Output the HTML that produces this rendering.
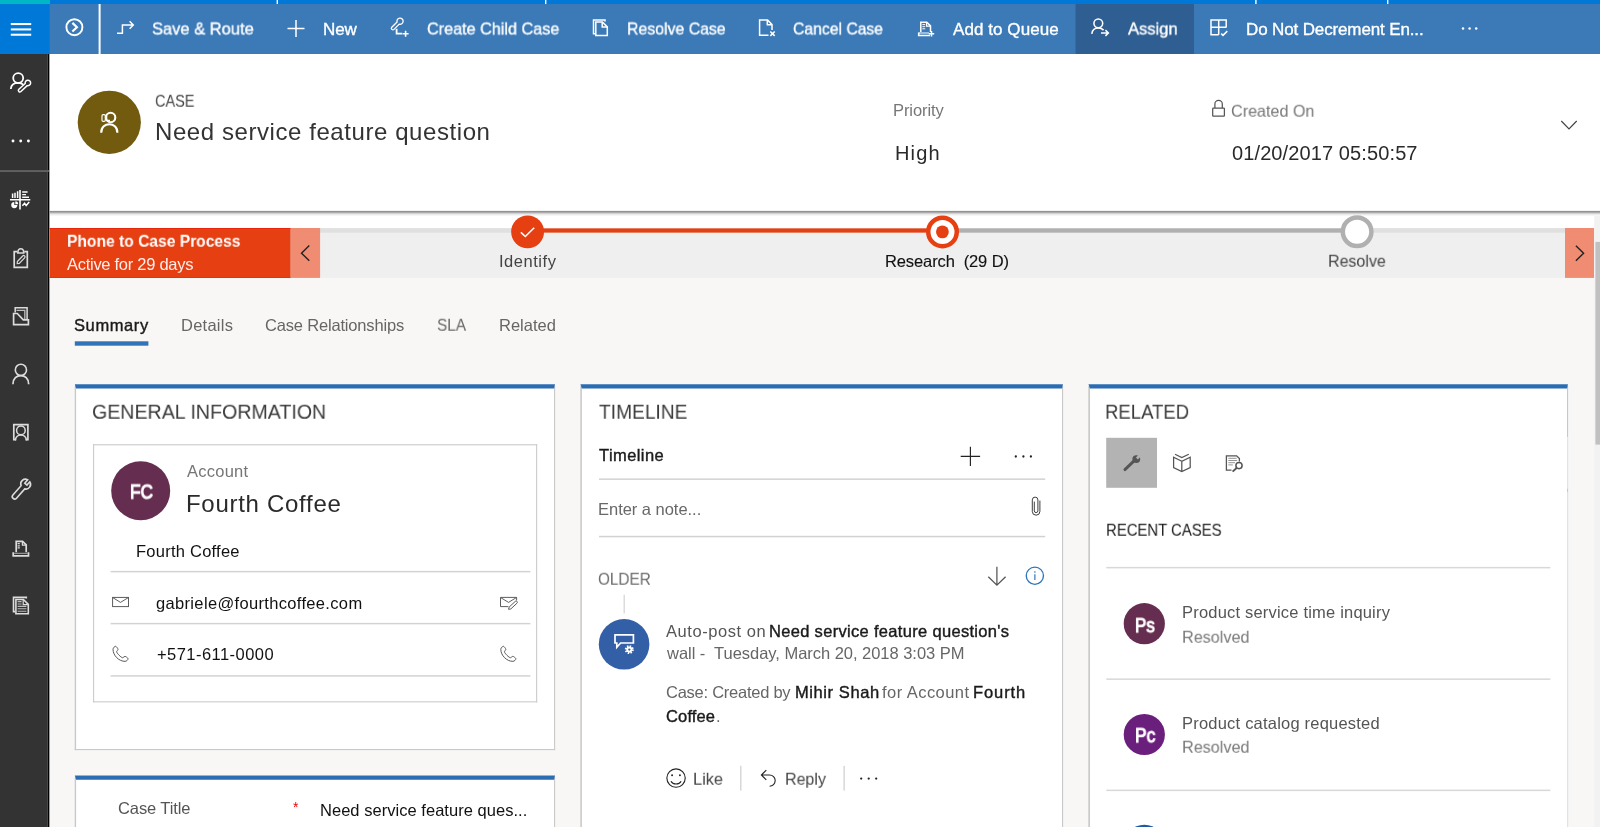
<!DOCTYPE html>
<html><head><meta charset="utf-8"><title>Case: Need service feature question</title>
<style>
html,body{margin:0;padding:0;}
body{width:1600px;height:827px;overflow:hidden;position:relative;background:#f8f7f6;font-family:"Liberation Sans", sans-serif;}
.t{position:absolute;white-space:nowrap;line-height:1;transform:translateY(-50%);will-change:transform;}
.a{position:absolute;}
</style></head><body>
<svg class="a" style="left:0;top:0" width="1600" height="827" viewBox="0 0 1600 827" shape-rendering="geometricPrecision">
<rect x="0" y="0" width="1600" height="4" fill="#0078d7"/>
<rect x="0" y="0" width="50" height="4" fill="#00b7c3"/>
<rect x="276.6" y="0" width="1.4" height="4" fill="#fff"/>
<rect x="545" y="0" width="1.4" height="4" fill="#fff"/>
<rect x="1255.2" y="0" width="1.4" height="4" fill="#fff"/>
<rect x="1387" y="0" width="1.4" height="4" fill="#fff"/>
<rect x="0" y="4" width="1600" height="50" fill="#3b79b7"/>
<rect x="0" y="4" width="49.6" height="50" fill="#0078d7"/>
<rect x="1075.6" y="4" width="118.4" height="50" fill="#2f5e92"/>
<rect x="98.6" y="4" width="2" height="50" fill="#fff"/>
<rect x="10.8" y="23" width="20.4" height="2.05" fill="#fff"/>
<rect x="10.8" y="28.4" width="20.4" height="2.05" fill="#fff"/>
<rect x="10.8" y="33.7" width="20.4" height="2.05" fill="#fff"/>
<rect x="49.4" y="54" width="1551" height="174" fill="#fff"/>
<rect x="0" y="54" width="47.8" height="773" fill="#333"/>
<rect x="47.8" y="54" width="1.55" height="773" fill="#000"/>
<rect x="0" y="170.2" width="49" height="1.7" fill="#666"/>
<defs><linearGradient id="sh" x1="0" y1="0" x2="0" y2="1"><stop offset="0" stop-color="#898989" stop-opacity="0"/><stop offset="0.06" stop-color="#898989" stop-opacity="0"/><stop offset="0.15" stop-color="#898989" stop-opacity="0.8"/><stop offset="0.25" stop-color="#898989" stop-opacity="1"/><stop offset="0.43" stop-color="#898989" stop-opacity="0.5"/><stop offset="0.64" stop-color="#898989" stop-opacity="0.17"/><stop offset="0.9" stop-color="#898989" stop-opacity="0"/></linearGradient></defs>
<rect x="49.4" y="210" width="1551" height="7" fill="url(#sh)"/>
<circle cx="109.3" cy="122.3" r="31.6" fill="#725b0e"/>
<rect x="49.4" y="228" width="1544.6" height="49.9" fill="#efefef"/>
<rect x="320" y="228.2" width="1245" height="4.5" fill="#e0e0e0"/>
<rect x="49.4" y="228" width="241.3" height="49.9" fill="#e63f12"/>
<rect x="49.4" y="228" width="241.3" height="0.7" fill="#e81c0a"/>
<rect x="49.4" y="277.3" width="241.3" height="0.6" fill="#e81c0a"/>
<rect x="290.7" y="228" width="29.4" height="49.9" fill="#f08c72"/>
<rect x="1565" y="228" width="29" height="49.9" fill="#f08c72"/>
<rect x="527" y="228.4" width="415" height="4.2" fill="#e63f12"/>
<rect x="942" y="228.4" width="400" height="4.2" fill="#b0b0b0"/>
<circle cx="527.6" cy="231.85" r="16.45" fill="#e63f12"/>
<circle cx="942.5" cy="231.9" r="14.25" fill="#fff" stroke="#e63f12" stroke-width="4.5"/>
<circle cx="942.4" cy="231.85" r="6.4" fill="#e63f12"/>
<circle cx="1357.1" cy="231.8" r="14.3" fill="#fff" stroke="#b0b0b0" stroke-width="4.5"/>
<rect x="1594.2" y="215.8" width="5.8" height="612" fill="#f2f2f2"/>
<rect x="1595.4" y="241.9" width="4.6" height="202.7" fill="#c1c1c1"/>
<rect x="74.8" y="341.3" width="73.6" height="4.4" fill="#3073b9"/>
<rect x="74.7" y="384" width="480.45" height="366.1" fill="#fff"/>
<rect x="74.7" y="386" width="1.4" height="364.1" fill="#c8c8c8"/>
<rect x="554.05" y="386" width="1.1" height="364.1" fill="#c8c8c8"/>
<rect x="74.7" y="749" width="480.45" height="1.1" fill="#c8c8c8"/>
<path d="M74.8 384.25 H555.05 L554.05 388.45 H76.1 Z" fill="#2b6cb3"/>
<rect x="74.7" y="775.3" width="480.45" height="64.7" fill="#fff"/>
<rect x="74.7" y="777.3" width="1.4" height="62.7" fill="#c8c8c8"/>
<rect x="554.05" y="777.3" width="1.1" height="62.7" fill="#c8c8c8"/>
<path d="M74.8 775.55 H555.05 L554.05 779.75 H76.1 Z" fill="#2b6cb3"/>
<rect x="580.3" y="384" width="482.8" height="456" fill="#fff"/>
<rect x="580.3" y="386" width="1.55" height="454" fill="#c8c8c8"/>
<rect x="1062" y="386" width="1.1" height="454" fill="#c8c8c8"/>
<path d="M580.4 384.25 H1063 L1062 388.45 H581.85 Z" fill="#2b6cb3"/>
<rect x="1088.3" y="384" width="479.8" height="456" fill="#fff"/>
<rect x="1088.3" y="386" width="1.65" height="454" fill="#c8c8c8"/>
<rect x="1567" y="386" width="1.1" height="454" fill="#c8c8c8"/>
<path d="M1088.4 384.25 H1568 L1567 388.45 H1089.95 Z" fill="#2b6cb3"/>
<rect x="1567" y="437.3" width="1.2" height="51" fill="#fff"/>
<rect x="1567" y="437.3" width="1.1" height="51" fill="#e4e4e4"/>
<rect x="1567" y="492" width="1.2" height="340" fill="#fff"/>
<rect x="1567" y="492" width="1.1" height="340" fill="#e2e2e2"/>
<rect x="93" y="444.2" width="444.2" height="1.15" fill="#cdcdcd"/>
<rect x="93" y="701.25" width="444.2" height="1.15" fill="#cdcdcd"/>
<rect x="93" y="444.2" width="1.15" height="258.2" fill="#cdcdcd"/>
<rect x="536.05" y="444.2" width="1.15" height="258.2" fill="#cdcdcd"/>
<circle cx="140.7" cy="490.7" r="29.5" fill="#652d50"/>
<rect x="110.6" y="570.9" width="419.8" height="1.45" fill="#d2d2d2"/>
<rect x="110.6" y="622.9" width="419.8" height="1.45" fill="#d2d2d2"/>
<rect x="110.6" y="675.2" width="419.8" height="1.45" fill="#d2d2d2"/>
<rect x="599" y="478.4" width="446.2" height="1.5" fill="#d2d2d2"/>
<rect x="599" y="535.8" width="446.2" height="1.5" fill="#d2d2d2"/>
<rect x="623.5" y="594.8" width="1.5" height="18.6" fill="#dcdcdc"/>
<circle cx="624.1" cy="644.3" r="25.3" fill="#335fa6"/>
<rect x="740" y="765.8" width="1.5" height="24.8" fill="#d8d8d8"/>
<rect x="843.4" y="765.8" width="1.5" height="24.8" fill="#d8d8d8"/>
<rect x="1106.2" y="437.8" width="50.8" height="50" fill="#b3b3b3"/>
<rect x="1106.3" y="566.9" width="444" height="1.5" fill="#d8d8d8"/>
<rect x="1106.3" y="678.4" width="444" height="1.5" fill="#d8d8d8"/>
<rect x="1106.3" y="789.6" width="444" height="1.5" fill="#d8d8d8"/>
<circle cx="1144.3" cy="623.7" r="20.6" fill="#652d50"/>
<circle cx="1144.3" cy="734.5" r="20.6" fill="#6b1f7c"/>
<circle cx="1144.3" cy="845.4" r="20.6" fill="#1e5aa8"/>
</svg>
<svg class="a" style="left:0;top:0" width="1600" height="60" viewBox="0 0 1600 60" fill="none" stroke="#fff" stroke-width="1.5" stroke-linecap="butt" stroke-linejoin="miter">
<!-- circle chevron -->
<circle cx="74.4" cy="27.2" r="8" stroke-width="1.9"/>
<path d="M72.4 22.9 L76.9 27.2 L72.4 31.5" stroke-width="2.2"/>
<!-- route -->
<path d="M117 33.3 H122.4 V25 H132.6 M129.6 21.3 L133.3 25 L129.6 28.7" stroke-width="1.5"/>
<!-- plus -->
<path d="M287.5 28.4 H304.5 M296 19.9 V36.9" stroke-width="1.5"/>
<!-- create child case -->
<g stroke-width="1.3">
<path transform="translate(392.9 28.3) rotate(-45)" d="M0 -1.55 H7.4 A3.1 3.1 0 1 1 7.4 1.55 H0 A1.55 1.55 0 0 1 0 -1.55 Z"/>
<path d="M396.6 28.8 V33.6 H402.2" stroke-width="1.8"/>
<path d="M402.6 33.8 H408.6 M405.6 30.8 V36.8" stroke-width="1.6"/>
</g>
<!-- resolve case (two pages) -->
<g stroke-width="1.5">
<path d="M595.2 33.8 H593.5 V20 H605 V21.6"/>
<path d="M595.8 22 H602.4 L607.3 26.9 V35.5 H595.8 Z"/>
<path d="M602.2 22.2 V27.1 H607.1"/>
</g>
<!-- cancel case -->
<g stroke-width="1.5">
<path d="M768.5 35.2 H759.6 V20.1 H767.6 L772 24.5 V30"/>
<path d="M767.3 20.4 V24.8 H771.7"/>
<path d="M770.3 31.5 L774.7 35.9 M774.7 31.5 L770.3 35.9" stroke-width="1.6"/>
</g>
<!-- add to queue -->
<g stroke-width="1.4">
<path d="M920.8 32 V22.2 H926.8 L930.5 25.9 V32" stroke-width="1.5"/>
<path d="M926.6 22.4 V26.1 H930.3" stroke-width="1.2"/>
<path d="M922.4 24.6 H925.2 M922.4 26.7 H925.2 M922.4 28.8 H925.2" stroke-width="1"/>
<path d="M918.7 32.4 V35.5 H930" stroke-width="1.6"/>
<path d="M918.7 33 H929" stroke-width="1"/>
<path d="M928.8 33.7 H934.2 M931.5 31 V36.4" stroke-width="1.5"/>
</g>
<!-- assign -->
<g stroke-width="1.55">
<circle cx="1098.3" cy="23.3" r="4.4"/>
<path d="M1091.8 33.8 C1092.2 30 1095 27.9 1098.3 27.9 C1100.5 27.9 1102.3 28.7 1103.6 30.1"/>
<path d="M1101 33 H1108.2 M1105.4 30.1 L1108.4 33 L1105.4 35.9" stroke-width="1.5"/>
</g>
<!-- table check -->
<g stroke-width="1.5">
<path d="M1226.2 27.6 V20 H1211 V34.7 H1218.7"/>
<path d="M1218.7 20 V34.7 M1211 27.3 H1226.2"/>
<path d="M1221.2 33.6 L1223 35.4 L1227.3 31.1" stroke-width="1.5"/>
</g>
<!-- more -->
<g fill="#fff" stroke="none"><circle cx="1463" cy="28.4" r="1.25"/><circle cx="1469.6" cy="28.4" r="1.25"/><circle cx="1476.2" cy="28.4" r="1.25"/></g>
</svg>
<svg class="a" style="left:50px;top:60px" width="1550" height="767" viewBox="50 60 1550 767" fill="none" stroke-linecap="butt" stroke-linejoin="miter">
<!-- case avatar icon -->
<g stroke="#fff" stroke-width="2.1">
<circle cx="110.6" cy="117.5" r="4.7"/>
<path d="M101.2 132.7 C101.2 121.4 117.4 121.4 117.4 132.7"/>
<rect x="102" y="114.6" width="3.3" height="6.8" rx="1.2" stroke-width="1.15"/>
<path d="M106.7 115.4 V120.3 H110" stroke-width="1.15"/>
</g>
<!-- lock -->
<g stroke="#555" stroke-width="1.25">
<rect x="1212.7" y="108.1" width="11.7" height="8.1" rx="0.6"/>
<path d="M1214.9 108 V104 A3.7 3.5 0 0 1 1222.3 104 V108"/>
</g>
<!-- header chevron -->
<path d="M1561.3 121 L1569 128.8 L1576.7 121" stroke="#444" stroke-width="1.2"/>
<!-- process chevrons -->
<path d="M309.3 245.6 L301.5 253.2 L309.3 260.8" stroke="#222" stroke-width="1.4"/>
<path d="M1575.9 245.7 L1583.6 253.2 L1575.9 260.7" stroke="#222" stroke-width="1.4"/>
<!-- identify check -->
<path d="M520.9 232.3 L525.3 236.5 L534.2 227.7" stroke="#fff" stroke-width="1.6"/>
<!-- email -->
<g stroke="#555" stroke-width="0.95">
<rect x="112.6" y="597.4" width="15.9" height="9.2"/>
<path d="M112.8 597.6 L120.5 602.4 L128.3 597.6"/>
<!-- email edit -->
<path d="M508.4 606.6 H500.5 V597.4 H516.6 V600.3"/>
<path d="M500.7 597.6 L508.5 602.4 L516.4 597.6"/>
<path transform="translate(508.6 609.3) rotate(-43)" d="M0 0 L1.8 -1.25 H10.3 A1.25 1.25 0 0 1 10.3 1.25 H1.8 Z" fill="#fff" stroke-width="0.9"/>
</g>
<!-- phones -->
<g stroke="#555" stroke-width="0.95" stroke-linejoin="round">
<path id="ph" transform="translate(112.2 645.6) scale(1.03)" d="M3.4 0.7 C2.4 0.7 0.8 2.1 0.8 3.6 C0.8 9.6 6.5 15.3 12.5 15.3 C14 15.3 15.4 13.7 15.4 12.7 C15.4 12.2 13.1 10.4 12.4 10.4 C11.7 10.4 10.8 11.8 10.2 11.8 C8.8 11.8 4.3 7.3 4.3 5.9 C4.3 5.3 5.7 4.4 5.7 3.7 C5.7 3 3.9 0.7 3.4 0.7 Z"/>
<path transform="translate(500 645.6) scale(1.03)" d="M3.4 0.7 C2.4 0.7 0.8 2.1 0.8 3.6 C0.8 9.6 6.5 15.3 12.5 15.3 C14 15.3 15.4 13.7 15.4 12.7 C15.4 12.2 13.1 10.4 12.4 10.4 C11.7 10.4 10.8 11.8 10.2 11.8 C8.8 11.8 4.3 7.3 4.3 5.9 C4.3 5.3 5.7 4.4 5.7 3.7 C5.7 3 3.9 0.7 3.4 0.7 Z"/>
</g>
<!-- timeline plus/dots/clip -->
<path d="M960.7 456.4 H980.1 M970.4 446.8 V466" stroke="#222" stroke-width="1.15"/>
<g fill="#222"><circle cx="1015.8" cy="456.5" r="1.15"/><circle cx="1023.4" cy="456.5" r="1.15"/><circle cx="1030.9" cy="456.5" r="1.15"/></g>
<path d="M1039.9 500.6 V511.4 A3.8 3.8 0 0 1 1032.3 511.4 V499.9 A2.8 2.8 0 0 1 1037.9 499.9 V510.8 A1.8 1.8 0 0 1 1034.3 510.8 V501.6" stroke="#333" stroke-width="0.95"/>
<!-- older arrow + info -->
<path d="M996.9 566.7 V584.6 M988.3 576.7 L996.9 585.2 L1005.6 576.7" stroke="#555" stroke-width="1.25"/>
<circle cx="1034.85" cy="575.7" r="8.6" stroke="#2e75b8" stroke-width="1.35"/>
<path d="M1034.85 574.3 V579.9 M1034.85 571.2 V572.7" stroke="#5b92c9" stroke-width="1.5"/>
<!-- post icon -->
<g stroke="#fff">
<path d="M615 643 V634.9 H633.4 V643 H620.6 L616.8 647.2 V643 Z" stroke-width="1.7"/>
<circle cx="629.3" cy="649.6" r="3.3" stroke-width="2.4" stroke-dasharray="1.35 1.24"/>
<circle cx="629.3" cy="649.6" r="2.1" stroke-width="1.9"/>
</g>
<!-- like / reply -->
<g stroke="#222" stroke-width="1.1">
<circle cx="676.05" cy="778.05" r="9.2"/>
<path d="M671 781.2 C672.6 784.9 679.5 784.9 681.1 781.2"/>
<path d="M761.4 775 H769.6 A5.6 5.6 0 0 1 769.6 786.2 M766.3 770.1 L761.4 775 L766.3 779.9"/>
</g>
<g fill="#222"><circle cx="672.1" cy="775.3" r="0.95"/><circle cx="679.9" cy="775.3" r="0.95"/>
<circle cx="861.2" cy="778.6" r="1.15"/><circle cx="868.7" cy="778.6" r="1.15"/><circle cx="876.2" cy="778.6" r="1.15"/></g>
<!-- related icons -->
<g stroke="#555">
<path d="M1124.9 469.6 L1134.6 460.4" stroke-width="2.9" stroke-linecap="round"/>
<circle cx="1136.3" cy="459.1" r="3.9" fill="#555" stroke="none"/>
<path d="M1136.9 458.5 L1141 454.4" stroke="#b3b3b3" stroke-width="2.7"/>
<g stroke-width="1.25">
<path d="M1181.8 461.2 L1173.6 457.2 V467.6 L1181.8 471.6 L1190.2 467.6 V457.2 Z M1181.8 461.2 V471.6"/>
<path d="M1175 454.2 L1181.8 457.6 L1188.8 454.2" />
</g>
<g stroke-width="1.3">
<path d="M1231.5 470.2 H1226.4 V455.8 H1236.6 L1239.4 458.6 V461.6"/>
<path d="M1228.3 458.3 H1236.6 M1228.3 460.5 H1237.2 M1228.3 462.7 H1235 M1228.3 464.9 H1232.8" stroke-width="0.9" stroke="#888"/>
<circle cx="1239" cy="465.6" r="3.1" stroke-width="1.5" fill="#fff"/>
<path d="M1236.6 468 L1232.6 471.6" stroke-width="1.9"/>
</g>
</g>
</svg>
<svg class="a" style="left:0;top:54px" width="50" height="773" viewBox="0 54 50 773" fill="none" stroke="#fff" stroke-width="1.6" stroke-linecap="butt" stroke-linejoin="miter">
<!-- person + wrench -->
<circle cx="18.2" cy="78.1" r="5" stroke-width="1.8"/>
<path d="M10.8 89 C11.1 85.3 14 82.9 18.2 82.9 C20.2 82.9 22 83.5 23.4 84.6" stroke-width="1.8"/>
<path transform="translate(19.9 90.4) rotate(-43)" d="M0 -1.5 H8.6 A2.75 2.75 0 1 1 8.6 1.5 H0 A1.5 1.5 0 0 1 0 -1.5 Z" stroke-width="1.5" fill="#333"/>
<!-- dots -->
<g fill="#fff" stroke="none"><circle cx="13" cy="141" r="1.45"/><circle cx="20.7" cy="141" r="1.45"/><circle cx="28.4" cy="141" r="1.45"/></g>
<!-- dashboard -->
<path d="M20 190 V209.6 M10 199.8 H30.3" stroke-width="1.6"/>
<path d="M12.6 198 V193.6 M15 198 V192.8 M17.6 198 V191.3" stroke-width="1.5"/>
<path d="M22.2 192 H27.6 M22.2 194.6 H26 M22.2 197.2 H29" stroke-width="1.4"/>
<path d="M14.3 202 A3.1 3.1 0 1 0 17.4 205.1 H14.3 Z" fill="#fff" stroke="none"/>
<path d="M15.3 201.3 A3 3 0 0 1 18.2 204.2 H15.3 Z" fill="#fff" stroke="none"/>
<path d="M22.4 205.8 L24.6 203.3 L26.2 205.6 L29.2 202" stroke-width="1.5"/>
<g stroke="#dcdcdc" stroke-width="1.7">
<!-- clipboard -->
<path d="M17.4 251.7 H14.2 V267.3 H27.3 V251.7 H24.2"/>
<path d="M17 252.9 H24.6 M17.9 252.6 C17.9 247.6 23.7 247.6 23.7 252.6" stroke-width="1.5"/>
<path transform="translate(17.2 263.6) rotate(-46)" d="M0 0 L1.6 -1.35 H9.3 A1.35 1.35 0 0 1 9.3 1.35 H1.6 Z" stroke-width="1.2"/>
<!-- folder -->
<path d="M13.6 313.5 H17.3 L23.3 319.9 H28.4 V324.7 H13.6 Z"/>
<path d="M15.2 312.6 V307.7 H27.1 V319" stroke-width="1.5"/>
<path d="M16.5 310.3 H24.8 V319" stroke-width="1.3" stroke="#bdbdbd"/>
<!-- person -->
<circle cx="20.9" cy="369.9" r="5.6" stroke-width="1.6"/>
<path d="M12.9 384.3 C12.9 372.6 28.7 372.6 28.7 384.3" stroke-width="1.7"/>
<!-- contact card -->
<path d="M15.9 439.6 H13.8 V424.7 H27.9 V439.6 H25.9" stroke-width="1.7"/>
<circle cx="20.9" cy="430.4" r="4.3" stroke-width="1.5"/>
<path d="M15.5 440.4 C15.5 433.2 26.3 433.2 26.3 440.4" stroke-width="1.6"/>
<!-- wrench -->
<path transform="translate(14.7 496.6) rotate(-48.6)" d="M0 -2.4 H12.4 A4.7 4.7 0 0 1 21.2 -1.3 L16.7 -1.3 L16.7 1.6 L21.1 1.6 A4.7 4.7 0 0 1 12.4 2.4 H0 A2.4 2.4 0 0 1 0 -2.4 Z" stroke-width="1.6"/>
<!-- queue -->
<path d="M16.2 552.3 V541.3 H22.6 L26.2 544.9 V552.3" stroke-width="1.7"/>
<path d="M22.4 541.5 V545.1 H26" stroke-width="1.2"/>
<path d="M17.6 543.7 H19.8 M17.6 545.8 H19.8 M17.6 547.9 H19.8" stroke-width="1.2"/>
<path d="M13.2 552.2 V555.8 H28.5 V552.2" stroke-width="1.7"/>
<path d="M14 553.3 H27.7" stroke-width="1" stroke="#aaa"/>
<!-- docs -->
<path d="M15 611.6 H13.5 V597.4 H26.3 V598.6" stroke-width="1.6"/>
<path d="M15.9 599.5 H23.4 L28.3 604.4 V613.7 H15.9 Z" stroke-width="1.6"/>
<path d="M23.2 599.7 V604.6 H28.1" stroke-width="1.2"/>
<path d="M17.6 601.6 H21.6 M17.6 604 H21.6 M17.6 606.4 H26.4 M17.6 608.8 H26.4 M17.6 611.2 H26.4" stroke-width="1.1" stroke="#bdbdbd"/>
</g>
</svg>

<div class="t" id="t0" style="left:152.29px;top:29.3px;font-size:17px;color:#fff;transform-origin:0 50%;transform:translateY(-50%) scaleX(0.9699);-webkit-text-stroke:0.35px #fff;">Save &amp; Route</div>
<div class="t" id="t1" style="left:323.30px;top:29.3px;font-size:17px;color:#fff;letter-spacing:-0.104px;-webkit-text-stroke:0.35px #fff;">New</div>
<div class="t" id="t2" style="left:426.67px;top:29.3px;font-size:17px;color:#fff;transform-origin:0 50%;transform:translateY(-50%) scaleX(0.9524);-webkit-text-stroke:0.35px #fff;">Create Child Case</div>
<div class="t" id="t3" style="left:626.59px;top:29.3px;font-size:17px;color:#fff;transform-origin:0 50%;transform:translateY(-50%) scaleX(0.9323);-webkit-text-stroke:0.35px #fff;">Resolve Case</div>
<div class="t" id="t4" style="left:792.97px;top:29.3px;font-size:17px;color:#fff;transform-origin:0 50%;transform:translateY(-50%) scaleX(0.9248);-webkit-text-stroke:0.35px #fff;">Cancel Case</div>
<div class="t" id="t5" style="left:952.77px;top:29.3px;font-size:17px;color:#fff;letter-spacing:0.069px;-webkit-text-stroke:0.35px #fff;">Add to Queue</div>
<div class="t" id="t6" style="left:1127.57px;top:29.3px;font-size:17px;color:#fff;transform-origin:0 50%;transform:translateY(-50%) scaleX(0.9747);-webkit-text-stroke:0.35px #fff;">Assign</div>
<div class="t" id="t7" style="left:1245.60px;top:29.3px;font-size:17px;color:#fff;letter-spacing:-0.135px;-webkit-text-stroke:0.35px #fff;">Do Not Decrement En...</div>
<div class="t" id="t8" style="left:155.25px;top:101px;font-size:16.5px;color:#444;transform-origin:0 50%;transform:translateY(-50%) scaleX(0.8758);">CASE</div>
<div class="t" id="t9" style="left:155.08px;top:131.5px;font-size:24px;color:#333;letter-spacing:0.575px;">Need service feature question</div>
<div class="t" id="t10" style="left:892.63px;top:109.5px;font-size:16.5px;color:#767676;letter-spacing:-0.085px;">Priority</div>
<div class="t" id="t11" style="left:895.00px;top:153px;font-size:20px;color:#2a2a2a;letter-spacing:1.174px;">High</div>
<div class="t" id="t12" style="left:1231.00px;top:110.7px;font-size:16.5px;color:#767676;transform-origin:0 50%;transform:translateY(-50%) scaleX(0.9789);">Created On</div>
<div class="t" id="t13" style="left:1232.38px;top:153px;font-size:20px;color:#2a2a2a;letter-spacing:0.110px;">01/20/2017 05:50:57</div>
<div class="t" id="t14" style="left:66.54px;top:241.2px;font-size:16.5px;color:#fff;font-weight:700;transform-origin:0 50%;transform:translateY(-50%) scaleX(0.9458);">Phone to Case Process</div>
<div class="t" id="t15" style="left:67.32px;top:263.7px;font-size:16.5px;color:#fdeeea;letter-spacing:-0.279px;">Active for 29 days</div>
<div class="t" id="t16" style="left:499.05px;top:261px;font-size:16.5px;color:#444;letter-spacing:0.526px;">Identify</div>
<div class="t" id="t17" style="left:884.69px;top:261px;font-size:16.5px;color:#111;letter-spacing:-0.111px;-webkit-text-stroke:0.12px #111;">Research&nbsp; (29 D)</div>
<div class="t" id="t18" style="left:1327.93px;top:261px;font-size:16.5px;color:#444;transform-origin:0 50%;transform:translateY(-50%) scaleX(0.9691);">Resolve</div>
<div class="t" id="t19" style="left:73.94px;top:325.2px;font-size:16.5px;color:#1a1a1a;letter-spacing:0.598px;-webkit-text-stroke:0.4px #1a1a1a;">Summary</div>
<div class="t" id="t20" style="left:180.93px;top:325.2px;font-size:16.5px;color:#666;letter-spacing:0.245px;">Details</div>
<div class="t" id="t21" style="left:265.00px;top:325.2px;font-size:16.5px;color:#666;letter-spacing:-0.177px;">Case Relationships</div>
<div class="t" id="t22" style="left:436.72px;top:325.2px;font-size:16.5px;color:#666;transform-origin:0 50%;transform:translateY(-50%) scaleX(0.9288);">SLA</div>
<div class="t" id="t23" style="left:498.93px;top:325.2px;font-size:16.5px;color:#666;letter-spacing:-0.008px;">Related</div>
<div class="t" id="t24" style="left:92.44px;top:412.2px;font-size:20.5px;color:#3a3a3a;transform-origin:0 50%;transform:translateY(-50%) scaleX(0.9562);">GENERAL INFORMATION</div>
<div class="t" id="t25" style="left:187.26px;top:471px;font-size:16.5px;color:#767676;letter-spacing:0.240px;">Account</div>
<div class="t" id="t26" style="left:186.00px;top:503.8px;font-size:24px;color:#2a2a2a;letter-spacing:0.708px;">Fourth Coffee</div>
<div class="t" id="t27" style="left:136.41px;top:551.2px;font-size:16.5px;color:#111;letter-spacing:0.247px;">Fourth Coffee</div>
<div class="t" id="t28" style="left:155.62px;top:603.2px;font-size:16.5px;color:#111;letter-spacing:0.336px;">gabriele@fourthcoffee.com</div>
<div class="t" id="t29" style="left:156.76px;top:653.9px;font-size:16.5px;color:#111;letter-spacing:0.452px;">+571-611-0000</div>
<div class="t" id="t30" style="left:117.76px;top:807.9px;font-size:16.5px;color:#555;letter-spacing:-0.104px;">Case Title</div>
<div class="t" id="t31" style="left:292.80px;top:806.5px;font-size:14px;color:#e00;">*</div>
<div class="t" id="t32" style="left:320.49px;top:810.2px;font-size:16.5px;color:#111;letter-spacing:0.035px;">Need service feature ques...</div>
<div class="t" id="t33" style="left:599.46px;top:412px;font-size:20.5px;color:#3a3a3a;transform-origin:0 50%;transform:translateY(-50%) scaleX(0.9364);">TIMELINE</div>
<div class="t" id="t34" style="left:599.03px;top:455.4px;font-size:16.5px;color:#1a1a1a;letter-spacing:0.426px;-webkit-text-stroke:0.4px #1a1a1a;">Timeline</div>
<div class="t" id="t35" style="left:597.71px;top:509.3px;font-size:16.5px;color:#686868;letter-spacing:-0.028px;">Enter a note...</div>
<div class="t" id="t36" style="left:598.30px;top:578.8px;font-size:16.5px;color:#686868;transform-origin:0 50%;transform:translateY(-50%) scaleX(0.9269);">OLDER</div>
<div class="t" id="t37" style="left:666.32px;top:631px;font-size:16.5px;color:#555;letter-spacing:0.550px;">Auto-post on</div>
<div class="t" id="t38" style="left:768.80px;top:631px;font-size:16.5px;color:#1a1a1a;letter-spacing:0.314px;-webkit-text-stroke:0.4px #1a1a1a;">Need service feature question's</div>
<div class="t" id="t39" style="left:666.57px;top:653.4px;font-size:16.5px;color:#666;letter-spacing:-0.032px;">wall -&nbsp; Tuesday, March 20, 2018 3:03 PM</div>
<div class="t" id="t40" style="left:665.76px;top:692.2px;font-size:16.5px;color:#666;letter-spacing:-0.253px;">Case: Created by</div>
<div class="t" id="t41" style="left:794.59px;top:692.2px;font-size:16.5px;color:#1a1a1a;letter-spacing:0.580px;-webkit-text-stroke:0.4px #1a1a1a;">Mihir Shah</div>
<div class="t" id="t42" style="left:882.38px;top:692.2px;font-size:16.5px;color:#666;letter-spacing:0.449px;">for Account</div>
<div class="t" id="t43" style="left:972.98px;top:692.2px;font-size:16.5px;color:#1a1a1a;letter-spacing:0.905px;-webkit-text-stroke:0.4px #1a1a1a;">Fourth</div>
<div class="t" id="t44" style="left:665.76px;top:715.5px;font-size:16.5px;color:#1a1a1a;letter-spacing:0.147px;-webkit-text-stroke:0.4px #1a1a1a;">Coffee</div>
<div class="t" id="t45" style="left:715.60px;top:715.5px;font-size:16.5px;color:#666;">.</div>
<div class="t" id="t46" style="left:693.48px;top:779.2px;font-size:16.5px;color:#444;transform-origin:0 50%;transform:translateY(-50%) scaleX(0.9930);">Like</div>
<div class="t" id="t47" style="left:785.41px;top:779.2px;font-size:16.5px;color:#444;transform-origin:0 50%;transform:translateY(-50%) scaleX(0.9689);">Reply</div>
<div class="t" id="t48" style="left:1104.98px;top:412px;font-size:20.5px;color:#3a3a3a;transform-origin:0 50%;transform:translateY(-50%) scaleX(0.9037);">RELATED</div>
<div class="t" id="t49" style="left:1105.99px;top:530.2px;font-size:16.5px;color:#1a1a1a;transform-origin:0 50%;transform:translateY(-50%) scaleX(0.9026);">RECENT CASES</div>
<div class="t" id="t50" style="left:1181.55px;top:612.2px;font-size:16.5px;color:#555;letter-spacing:0.195px;">Product service time inquiry</div>
<div class="t" id="t51" style="left:1181.55px;top:636.6px;font-size:16.5px;color:#777;transform-origin:0 50%;transform:translateY(-50%) scaleX(0.9812);">Resolved</div>
<div class="t" id="t52" style="left:1181.55px;top:722.7px;font-size:16.5px;color:#555;letter-spacing:0.210px;">Product catalog requested</div>
<div class="t" id="t53" style="left:1181.55px;top:747.1px;font-size:16.5px;color:#777;transform-origin:0 50%;transform:translateY(-50%) scaleX(0.9812);">Resolved</div>
<div class="t" id="t54" style="left:129.96px;top:491.8px;font-size:20.8px;color:#fff;transform-origin:0 50%;transform:translateY(-50%) scaleX(0.8245);-webkit-text-stroke:1.2px #fff;">FC</div>
<div class="t" id="t55" style="left:1134.52px;top:625.8px;font-size:19.5px;color:#fff;transform-origin:0 50%;transform:translateY(-50%) scaleX(0.8716);-webkit-text-stroke:1px #fff;">Ps</div>
<div class="t" id="t56" style="left:1134.51px;top:736.4px;font-size:19.5px;color:#fff;transform-origin:0 50%;transform:translateY(-50%) scaleX(0.8926);-webkit-text-stroke:1px #fff;">Pc</div>
</body></html>
